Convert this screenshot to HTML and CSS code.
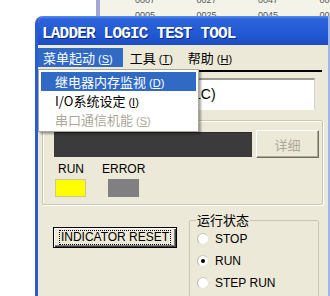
FILE: index.html
```html
<!DOCTYPE html>
<html lang="zh">
<head>
    <meta charset="UTF-8">
    <title>LADDER LOGIC TEST TOOL</title>
    <link rel="stylesheet" href="styles.css">
</head>
<body>
    <div class="back-window">
        <div class="back-edge"></div>
        <div class="back-table">
            <div class="back-row"><span>0007</span><span>0027</span><span>0047</span><span>0067</span></div>
            <div class="back-row"><span>0005</span><span>0025</span><span>0045</span><span>0065</span></div>
        </div>
    </div>

    <div class="window">
        <div class="titlebar">LADDER LOGIC TEST TOOL</div>
        <div class="menubar">
            <span class="menu-item open">菜单起动<span class="key">(<u>S</u>)</span></span>
            <span class="menu-item">工具<span class="key">(<u>T</u>)</span></span>
            <span class="menu-item">帮助<span class="key">(<u>H</u>)</span></span>
        </div>

        <div class="client">
            <div class="rule"></div>
            <div class="edit">(PLC)</div>

            <div class="status-group">
                <div class="lamp-row">
                    <div class="lamp-display"></div>
                    <div class="btn btn-disabled">详细</div>
                </div>
                <div class="indicators">
                    <div class="indicator">
                        <span class="indicator-label">RUN</span>
                        <i class="lamp lamp-run"></i>
                    </div>
                    <div class="indicator">
                        <span class="indicator-label">ERROR</span>
                        <i class="lamp lamp-error"></i>
                    </div>
                </div>
            </div>

            <div class="bottom-row">
                <div class="btn btn-default"><span class="focus">INDICATOR RESET</span></div>
                <fieldset class="mode-group">
                    <legend>运行状态</legend>
                    <div class="radio"><i class="radio-dot"></i>STOP</div>
                    <div class="radio"><i class="radio-dot checked"></i>RUN</div>
                    <div class="radio"><i class="radio-dot"></i>STEP RUN</div>
                </fieldset>
            </div>
        </div>

        <div class="dropdown">
            <div class="dropdown-item active">继电器内存监视<span class="key">(<u>D</u>)</span></div>
            <div class="dropdown-item">I/O系统设定<span class="key">(<u>I</u>)</span></div>
            <div class="dropdown-item disabled">串口通信机能<span class="key">(<u>S</u>)</span></div>
        </div>
    </div>
</body>
</html>
```

FILE: styles.css
```css
* {
    box-sizing: border-box;
}
body {
    margin: 0;
    width: 330px;
    height: 296px;
    overflow: hidden;
    position: relative;
    background: #fff;
    font-family: "Liberation Sans", Arial, sans-serif;
    font-size: 12px;
    color: #000;
}

/* window behind */
.back-window {
    position: absolute;
    left: 96px;
    top: 0;
    width: 240px;
    height: 40px;
    display: flex;
}
.back-edge {
    width: 7px;
    border-left: 4px solid #a4a7d6;
    background: #dcdcec;
}
.back-table {
    flex: 1;
    background: #f4f3ea;
    padding-left: 35px;
    margin-top: -7px;
    font-size: 9px;
    color: #555;
}
.back-row {
    display: flex;
    height: 15px;
    line-height: 15px;
}
.back-row span {
    width: 61.5px;
    flex-shrink: 0;
}

/* main window */
.window {
    position: absolute;
    left: 35px;
    top: 16px;
    width: 295px;
    height: 290px;
    background: #ece9d8;
    border-left: 3px solid #2a5bd0;
    border-right: 2px solid #9fb6e8;
    border-radius: 8px 0 0 0;
    overflow: hidden;
}
.titlebar {
    height: 29px;
    padding: 8px 0 0 4px;
    background: linear-gradient(#5a8ff0 0, #2d64da 3px, #2259d4 60%, #1b4ec4 100%);
    color: #fff;
    font-family: "Liberation Mono", monospace;
    font-weight: bold;
    font-size: 16px;
    line-height: 20px;
    letter-spacing: -0.8px;
    text-shadow: 1px 1px 0 #0a2a80;
}
.menubar {
    height: 22px;
    padding-top: 3px;
    display: flex;
    font-family: "Noto Sans CJK SC", sans-serif;
    font-size: 13px;
}
.menu-item {
    height: 19px;
    line-height: 19px;
    padding: 0 8px 0 7px;
}
.menu-item.open {
    background: #316ac5;
    color: #fff;
    padding: 0 10px 0 5px;
}
.key {
    font-family: "Liberation Sans", Arial, sans-serif;
    font-size: 11px;
    margin-left: 3px;
}

.client {
    padding: 0 5px 0 4px;
}
.rule {
    height: 2px;
    background: #000;
    margin: 3px 1px 0 4px;
}
.edit {
    height: 32px;
    margin: 6px 8px 0 4px;
    padding-left: 131px;
    background: #fff;
    border-top: 2px solid #9d9b90;
    border-left: 2px solid #9d9b90;
    border-right: 1px solid #d4d0c8;
    border-bottom: 1px solid #fff;
    font-size: 14px;
    line-height: 29px;
    white-space: nowrap;
    overflow: hidden;
}

.status-group {
    margin-top: 10px;
    height: 85px;
    border: 1px solid #c9c6b4;
    border-radius: 2px;
    box-shadow: inset 1px 1px 0 #fff, 1px 1px 0 #fff;
}
.lamp-row {
    display: flex;
    gap: 4px;
    padding: 9px 0 0 11px;
}
.lamp-display {
    width: 198px;
    height: 25px;
    margin-top: 2px;
    background: #3b3b3b;
    border-top: 1px solid #2a2a2a;
}
.btn {
    display: flex;
    align-items: center;
    justify-content: center;
    background: #ece9d8;
    border: 1px solid;
    border-color: #fff #716f64 #716f64 #fff;
    box-shadow: inset -1px -1px 0 #aca899;
}
.btn-disabled {
    width: 63px;
    height: 28px;
    color: #aca899;
    font-family: "Noto Sans CJK SC", sans-serif;
    font-size: 13px;
}
.indicators {
    display: flex;
    gap: 16px;
    margin-top: 4px;
    padding-left: 12px;
}
.indicator {
    display: flex;
    flex-direction: column;
}
.indicator-label {
    line-height: 14px;
    padding-left: 3px;
}
.indicator + .indicator .indicator-label {
    padding-left: 0;
}
.lamp {
    display: block;
    width: 31px;
    height: 18px;
    margin-top: 3px;
}
.lamp-run {
    background: #ffff00;
    border: 1px solid #c8c89a;
}
.lamp-error {
    background: #808080;
    margin-left: 6px;
}

.bottom-row {
    display: flex;
    align-items: flex-start;
}
.btn-default {
    width: 124px;
    height: 21px;
    margin: 22px 0 0 11px;
    border: 1px solid #000;
    box-shadow: inset 1px 1px 0 #fff, inset -1px -1px 0 #404040, inset -2px -2px 0 #808080;
}
.focus {
    outline: 1px dotted #000;
    padding: 0 1px;
    line-height: 13px;
}
.mode-group {
    width: 130px;
    height: 100px;
    margin: 8px 0 0 12px;
    padding: 0 0 0 6px;
    min-width: 0;
    border: 1px solid #c9c6b4;
    border-radius: 2px;
}
.mode-group legend {
    padding: 0 1px;
    font-family: "Noto Sans CJK SC", sans-serif;
    font-size: 13px;
    line-height: 14px;
}
.radio {
    display: flex;
    align-items: center;
    height: 22px;
}
.radio:first-of-type {
    margin-top: 1px;
}
.radio-dot {
    position: relative;
    width: 12px;
    height: 12px;
    margin: 0 6px 0 1px;
    border-radius: 50%;
    background: #fff;
    border: 1px solid #e6e4da;
    border-left-color: #b9b7ab;
    border-top-color: #c9c7bb;
}
.radio-dot.checked::after {
    content: "";
    position: absolute;
    left: 3px;
    top: 3px;
    width: 4px;
    height: 4px;
    border-radius: 50%;
    background: #000;
}

/* open menu */
.dropdown {
    position: absolute;
    left: 0;
    top: 53px;
    width: 161px;
    padding: 2px;
    background: #fff;
    border: 1px solid #aca899;
    box-shadow: 2px 2px 2px rgba(0, 0, 0, 0.35);
    font-family: "Noto Sans CJK SC", sans-serif;
    font-size: 13px;
}
.dropdown-item {
    height: 19px;
    line-height: 19px;
    padding-left: 14px;
    white-space: nowrap;
}
.dropdown-item.active {
    background: #316ac5;
    color: #fff;
}
.dropdown-item.disabled {
    color: #aca899;
}
```
